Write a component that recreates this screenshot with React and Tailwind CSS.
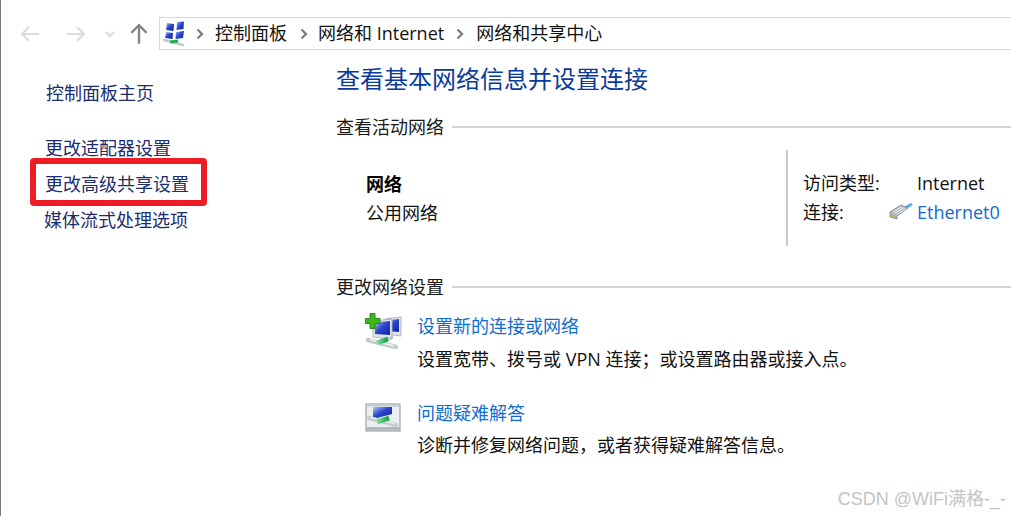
const FONT = "font-['Open_Sans','Noto_Sans_CJK_SC',sans-serif]";

function Chevron() {
  return (
    <svg width="8" height="12" viewBox="0 0 8 12" className="shrink-0">
      <path d="M1.5 1.5 L6 6 L1.5 10.5" fill="none" stroke="#808080" strokeWidth="2.4" />
    </svg>
  );
}

function Arrow({ dir, color, size = 22 }) {
  const rot = { left: 180, right: 0, up: -90 }[dir];
  return (
    <svg width={size} height={size} viewBox="0 0 22 22" style={{ transform: `rotate(${rot}deg)` }}>
      <path d="M2 11 H19 M12 4 L19 11 L12 18" fill="none" stroke={color} strokeWidth="2.2" />
    </svg>
  );
}

function Grads() {
  return (
    <svg width="0" height="0" className="absolute">
      <defs>
        <linearGradient id="scr" x1="0" y1="0" x2="1" y2="1">
          <stop offset="0" stopColor="#b8c8f4" />
          <stop offset="0.45" stopColor="#2c48d0" />
          <stop offset="1" stopColor="#0f1f9c" />
        </linearGradient>
        <linearGradient id="plug" x1="0" y1="0" x2="1" y2="0">
          <stop offset="0" stopColor="#7fe09a" />
          <stop offset="1" stopColor="#12a040" />
        </linearGradient>
      </defs>
    </svg>
  );
}

function NetIcon() {
  return (
    <svg width="24" height="25" viewBox="0 0 24 25">
      <path d="M4 2 L11 3 L10.5 10 L3 9 Z" fill="url(#scr)" />
      <path d="M14 1 L21 0.5 L20.5 8 L13.5 9 Z" fill="url(#scr)" />
      <path d="M3 11 L10 12 L9.5 18 L2 17 Z" fill="url(#scr)" />
      <path d="M13 11 L21 10 L20 17 L12.5 18 Z" fill="url(#scr)" />
      <path d="M1 19 L20 24" stroke="#c4caca" strokeWidth="2.6" strokeLinecap="round" />
      <path d="M7 21 L15 20" stroke="#22b04a" strokeWidth="3" />
    </svg>
  );
}

function Monitor({ x, y, w, h }) {
  return (
    <g>
      <path d={`M${x} ${y + 2} L${x + w} ${y} V${y + h} L${x} ${y + h - 2} Z`} fill="#dfe3ea" stroke="#a4a8b4" strokeWidth="0.8" />
      <path d={`M${x + 2} ${y + 3.5} L${x + w - 2} ${y + 2} V${y + h - 4} L${x + 2} ${y + h - 5} Z`} fill="url(#scr)" />
    </g>
  );
}

function Cable() {
  return (
    <g>
      <path d="M3 27 L31 34" stroke="#c2cbc8" strokeWidth="4.5" strokeLinecap="round" />
      <path d="M5 26.5 L29 33" stroke="#f2f4f4" strokeWidth="1.3" />
      <path d="M12 30 L23 26" stroke="url(#plug)" strokeWidth="5" />
    </g>
  );
}

function SetupIcon() {
  return (
    <svg width="37" height="37" viewBox="0 0 37 37" className="shrink-0">
      <Monitor x={20} y={4} w={16} h={19} />
      <Monitor x={8} y={6} w={19} h={20} />
      <path d="M28 24 L24 26" stroke="#b8bcc4" strokeWidth="2" />
      <Cable />
      <path d="M5 0.5 h5 v5 h5 v5 h-5 v5 H5 v-5 H0.5 v-5 H5 z" fill="#3cb81c" stroke="#2c8c12" strokeWidth="1" />
    </svg>
  );
}

function TroubleIcon() {
  return (
    <svg width="36" height="29" viewBox="0 0 36 29" className="shrink-0">
      <rect x="1" y="1" width="34" height="27" fill="#eceef0" stroke="#8c9094" />
      <rect x="1.5" y="24" width="33" height="3.5" fill="#b4b8bc" />
      <rect x="1.5" y="1.5" width="33" height="2" fill="#c8ccd0" />
      <path d="M8 4 H27 V11 L12 15 L8 14 Z" fill="url(#scr)" />
      <path d="M4 15 L31 22" stroke="#c2cbc8" strokeWidth="4" strokeLinecap="round" />
      <path d="M5 14.5 L30 21" stroke="#f2f4f4" strokeWidth="1.1" />
      <path d="M12 19 L24 15" stroke="url(#plug)" strokeWidth="5" />
    </svg>
  );
}

function EthernetIcon() {
  return (
    <svg width="25" height="18" viewBox="0 0 25 18" className="shrink-0">
      <path d="M17 5 L24 1" stroke="#52b0ec" strokeWidth="3" />
      <path d="M2 9 L13 2 L20 5 L9 13 L9 16 L2 14 Z" fill="#b4bac0" stroke="#767e86" strokeWidth="0.8" />
      <path d="M5 9 L14 3.5 M7 10 L16 4.5 M9 11.5 L18 5.5" stroke="#eceff1" strokeWidth="1" />
      <path d="M3 11.5v2.5M5 12v2.5M7 12.5v2.5" stroke="#c9a83c" strokeWidth="1.2" />
    </svg>
  );
}

function SectionTitle({ children, mt }) {
  return (
    <div className={`flex items-center gap-2 h-[26px] ${mt}`}>
      <span className="text-[18px] leading-[26px] text-[#1a1a1a] whitespace-nowrap">{children}</span>
      <div className="flex-1 h-0.5 bg-[#d4d4d4]" />
    </div>
  );
}

function SideLink({ children, className = "" }) {
  return <a className={`block text-[18px] leading-[26px] text-[#1c2c6c] whitespace-nowrap ${className}`}>{children}</a>;
}

function Task({ icon, title, desc, iconClass, gap, className = "" }) {
  return (
    <div className={`flex ${className}`}>
      <div className={`w-[81px] pl-[29px] ${iconClass}`}>{icon}</div>
      <div>
        <div className="text-[18px] leading-[26px] text-[#0f6cd0] whitespace-nowrap">{title}</div>
        <div className={`text-[18px] leading-[26px] ${gap} text-[#111] whitespace-nowrap`}>{desc}</div>
      </div>
    </div>
  );
}

export default function App() {
  return (
    <div className={`${FONT} relative w-[1011px] h-[516px] overflow-hidden bg-white border-l border-[#7a7a7a]`}>
      <Grads />
      <div className="flex items-center h-[50px] pt-[17px]">
        <div className="flex items-center w-[158px] pl-[18px] h-[33px]">
          <Arrow dir="left" color="#dcdcdc" />
          <div className="ml-6"><Arrow dir="right" color="#dcdcdc" /></div>
          <svg width="12" height="8" viewBox="0 0 12 8" className="ml-[17px]">
            <path d="M2 2 L6 6 L10 2" fill="none" stroke="#dcdcdc" strokeWidth="2" />
          </svg>
          <div className="ml-[11px]"><Arrow dir="up" color="#858585" size={24} /></div>
        </div>
        <div className="flex items-center flex-1 h-[33px] border border-[#d9d9d9] border-r-0 pl-[3px] text-[18px] text-[#111] whitespace-nowrap">
          <NetIcon />
          <div className="ml-[9px]"><Chevron /></div>
          <span className="ml-[11px]">控制面板</span>
          <div className="ml-[13px]"><Chevron /></div>
          <span className="ml-[10px]">网络和 Internet</span>
          <div className="ml-[12px]"><Chevron /></div>
          <span className="ml-[12px]">网络和共享中心</span>
        </div>
      </div>

      <div className="flex">
        <aside className="w-[335px] shrink-0 pl-[44px]">
          <SideLink className="mt-[30px] ml-px">控制面板主页</SideLink>
          <SideLink className="mt-[29px]">更改适配器设置</SideLink>
          <SideLink className="mt-2.5">更改高级共享设置</SideLink>
          <SideLink className="mt-2.5 -ml-px">媒体流式处理选项</SideLink>
        </aside>

        <main className="flex-1 min-w-0">
          <h1 className="mt-[12px] text-[24px] leading-[34px] font-normal text-[#0b3a9a] whitespace-nowrap">查看基本网络信息并设置连接</h1>
          <SectionTitle mt="mt-[18px]">查看活动网络</SectionTitle>
          <div className="flex h-[96px] mt-[10px]">
            <div className="w-[450px] pl-[30px] pt-[21px]">
              <div className="text-[18px] leading-[26px] font-bold text-black">网络</div>
              <div className="text-[18px] leading-[26px] mt-[3px] text-[#111]">公用网络</div>
            </div>
            <div className="flex-1 border-l-2 border-[#c8c8c8] pl-[15px] pt-[20px] text-[18px] leading-[26px] text-[#111]">
              <div className="flex">
                <span className="w-[114px]">访问类型:</span>
                <span>Internet</span>
              </div>
              <div className="flex items-center mt-[3px]">
                <span className="w-[85px]">连接:</span>
                <EthernetIcon />
                <span className="ml-[4px] text-[#0f6cd0]">Ethernet0</span>
              </div>
            </div>
          </div>
          <SectionTitle mt="mt-[28px]">更改网络设置</SectionTitle>
          <Task
            className="mt-[13px]"
            iconClass="pt-0"
            gap="mt-[7px]"
            icon={<SetupIcon />}
            title="设置新的连接或网络"
            desc="设置宽带、拨号或 VPN 连接；或设置路由器或接入点。"
          />
          <Task
            className="mt-[28px]"
            iconClass="pt-[3px]"
            gap="mt-[6px]"
            icon={<TroubleIcon />}
            title="问题疑难解答"
            desc="诊断并修复网络问题，或者获得疑难解答信息。"
          />
        </main>
      </div>

      <div className="absolute left-[29px] top-[158px] w-[177px] h-[48px] border-[6px] border-[#ee1c25] rounded-[4px]" />
      <div className="absolute right-[5px] top-[487px] font-['Liberation_Sans','Noto_Sans_CJK_SC',sans-serif] text-[18px] leading-6 text-[#c4c4c4] whitespace-nowrap">CSDN @WiFi满格-_-</div>
    </div>
  );
}
